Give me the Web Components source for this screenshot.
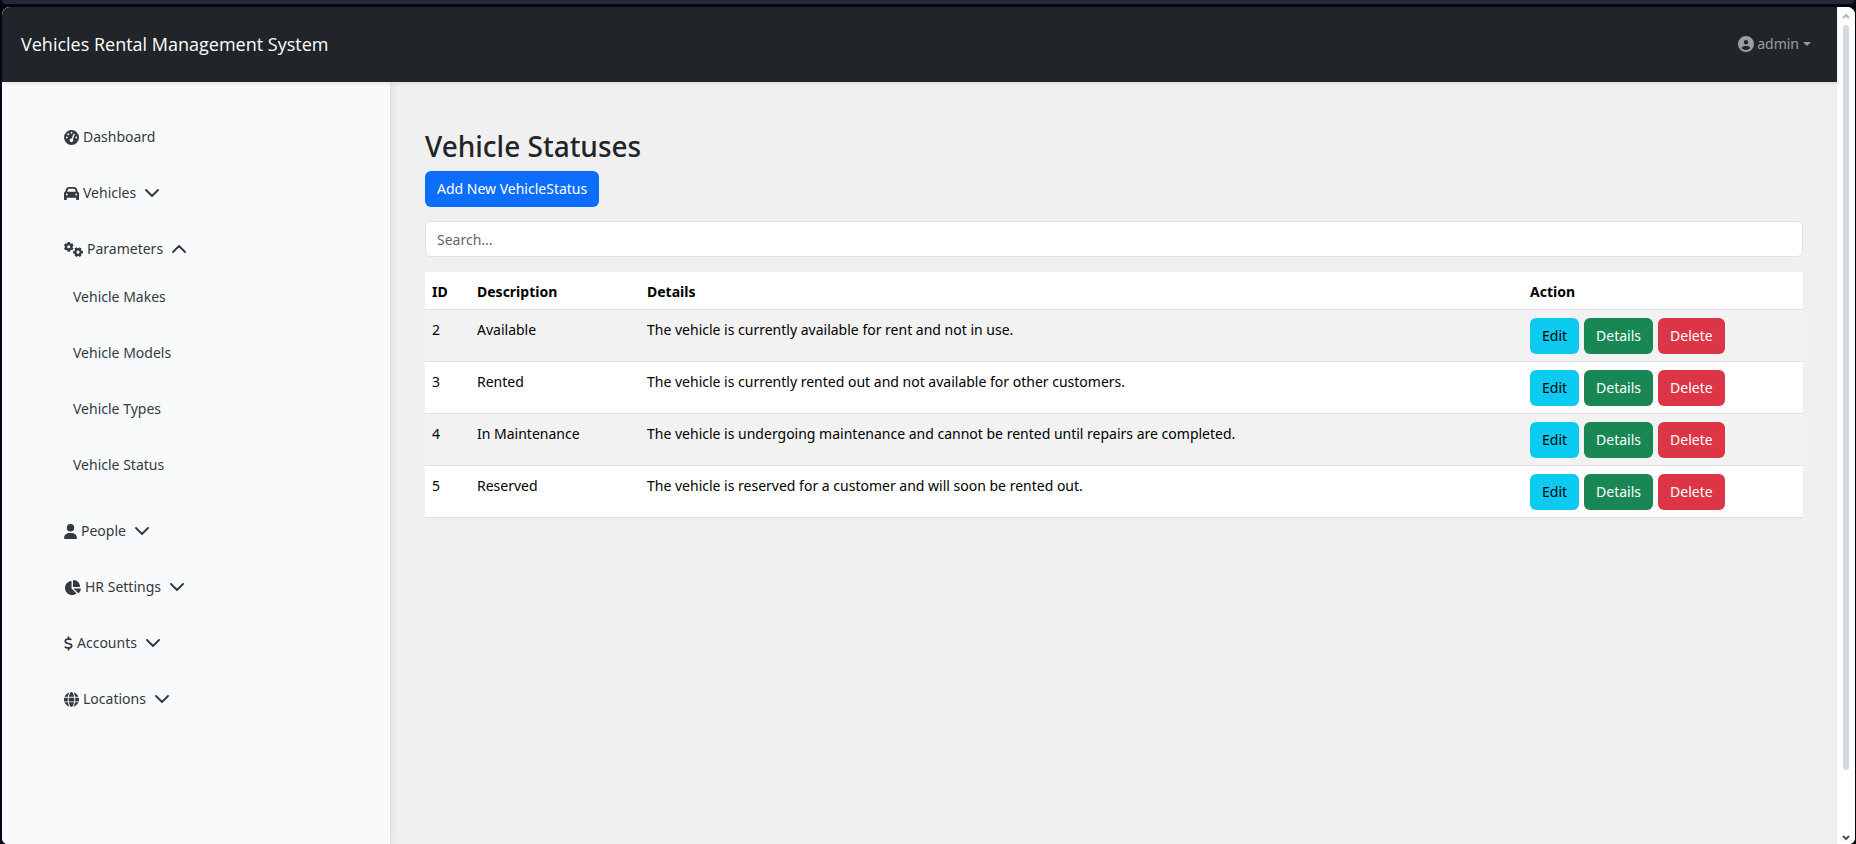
<!DOCTYPE html>
<html lang="en">
<head>
<meta charset="utf-8">
<title>Vehicle Statuses - Vehicles Rental Management System</title>
<style>
  html, body { margin: 0; background: #030616; }
  body { font: 14px/24px "Noto Sans", "Open Sans", sans-serif; color: #212529; }
</style>
</head>
<body>
<app-window>
  <app-header slot="header" brand="Vehicles Rental Management System" user="admin"></app-header>
  <side-nav slot="nav">
    <nav-item icon="gauge">Dashboard</nav-item>
    <nav-item icon="car" menu="closed">Vehicles</nav-item>
    <nav-item icon="gears" menu="open">Parameters
      <nav-sub slot="sub">Vehicle Makes</nav-sub>
      <nav-sub slot="sub">Vehicle Models</nav-sub>
      <nav-sub slot="sub">Vehicle Types</nav-sub>
      <nav-sub slot="sub">Vehicle Status</nav-sub>
    </nav-item>
    <nav-item icon="user" menu="closed">People</nav-item>
    <nav-item icon="pie" menu="closed">HR Settings</nav-item>
    <nav-item icon="dollar" menu="closed">Accounts</nav-item>
    <nav-item icon="globe" menu="closed">Locations</nav-item>
  </side-nav>
  <status-page></status-page>
</app-window>

<script>
const ICONS = {
  gauge: [512, 'M0 256a256 256 0 1 1 512 0A256 256 0 1 1 0 256zM288 96a32 32 0 1 0 -64 0 32 32 0 1 0 64 0zM256 416c35.300 0 64-28.700 64-64c0-17.400-6.900-33.100-18.100-44.600L366 161.700c5.300-12.100-.2-26.300-12.300-31.600s-26.300 .2-31.600 12.300L257.900 288c-.6 0-1.300 0-1.900 0c-35.300 0-64 28.700-64 64s28.700 64 64 64zM176 144a32 32 0 1 0 -64 0 32 32 0 1 0 64 0zM96 288a32 32 0 1 0 0-64 32 32 0 1 0 0 64zm352-32a32 32 0 1 0 -64 0 32 32 0 1 0 64 0z'],
  car: [512, 'M135.2 117.4L109.1 192H402.9l-26.1-74.6C372.3 104.6 360.2 96 346.6 96H165.4c-13.6 0-25.7 8.6-30.2 21.4zM39.6 196.8L74.8 96.3C88.3 57.8 124.6 32 165.4 32H346.6c40.8 0 77.1 25.8 90.6 64.3l35.2 100.5c23.2 9.6 39.6 32.5 39.6 59.2V400v48c0 17.7-14.3 32-32 32H448c-17.7 0-32-14.3-32-32V400H96v48c0 17.7-14.3 32-32 32H32c-17.7 0-32-14.3-32-32V400 256c0-26.7 16.4-49.6 39.6-59.2zM128 288a32 32 0 1 0 -64 0 32 32 0 1 0 64 0zm288 32a32 32 0 1 0 0-64 32 32 0 1 0 0 64z'],
  user: [448, 'M224 256A128 128 0 1 0 224 0a128 128 0 1 0 0 256zm-45.7 48C79.8 304 0 383.8 0 482.3C0 498.7 13.3 512 29.7 512H418.3c16.4 0 29.7-13.3 29.7-29.7C448 383.8 368.2 304 269.7 304H178.3z'],
  pie: [576, 'M304 240V16.6c0-9 7-16.6 16-16.6C443.7 0 544 100.3 544 224c0 9-7.6 16-16.6 16H304zM32 272C32 150.7 122.1 50.3 239 34.3c9.2-1.3 17 6.1 17 15.4V288L412.5 444.5c6.7 6.7 6.2 17.7-1.5 23.1C371.8 495.6 323.8 512 272 512C139.5 512 32 404.6 32 272zm526.4 16c9.3 0 16.6 7.8 15.4 17c-7.7 55.9-34.6 105.6-73.9 142.3c-6 5.6-15.4 5.2-21.2-.7L320 288H558.4z'],
  dollar: [320, 'M160 0c17.7 0 32 14.3 32 32V67.7c1.6 .2 3.1 .4 4.7 .7c.4 .1 .7 .1 1.1 .2l48 8.8c17.4 3.2 28.9 19.9 25.7 37.2s-19.9 28.9-37.2 25.7l-47.5-8.7c-31.3-4.6-58.9-1.5-78.3 6.2s-27.2 18.3-29 28.1c-2 10.7-.5 16.7 1.2 20.4c1.8 3.9 5.5 8.3 12.8 13.2c16.3 10.7 41.3 17.7 73.7 26.3l2.9 .8c28.6 7.6 63.6 16.8 89.6 33.8c14.2 9.3 27.6 21.9 35.9 39.5c8.5 17.9 10.3 37.9 6.4 59.2c-6.9 38-33.1 63.4-65.6 76.7c-13.7 5.6-28.6 9.2-44.4 11V480c0 17.7-14.3 32-32 32s-32-14.3-32-32V445.1c-.4-.1-.9-.1-1.3-.2l-.2 0 0 0c-24.4-3.8-64.5-14.3-91.5-26.3c-16.1-7.2-23.4-26.1-16.2-42.2s26.1-23.4 42.2-16.2c20.9 9.3 55.3 18.5 75.2 21.6c31.9 4.7 58.2 2 76-5.3c16.9-6.9 24.6-16.9 26.8-28.9c1.900-10.6 .4-16.7-1.300-20.4c-1.900-4-5.600-8.400-13-13.300c-16.400-10.700-41.500-17.700-74-26.300l-2.800-.7 0 0C119.400 279.300 84.400 270 58.400 253c-14.200-9.300-27.500-22-35.800-39.600c-8.400-17.900-10.100-37.900-6.100-59.200C23.700 116 52.300 91.200 84.800 78.300c13.300-5.300 27.900-8.900 43.200-11V32c0-17.700 14.300-32 32-32z'],
  globe: [512, 'M352 256c0 22.2-1.2 43.6-3.3 64H163.3c-2.2-20.4-3.3-41.8-3.3-64s1.2-43.6 3.3-64H348.7c2.2 20.4 3.3 41.8 3.3 64zm28.8-64H503.9c5.3 20.5 8.1 41.9 8.1 64s-2.8 43.5-8.1 64H380.8c2.1-20.6 3.2-42 3.2-64s-1.1-43.4-3.2-64zm112.6-32H376.7c-10-63.9-29.8-117.4-55.3-151.6c78.3 20.7 142 77.5 171.9 151.6zm-149.1 0H167.7c6.1-36.4 15.5-68.6 27-94.7c10.5-23.6 22.2-40.7 33.5-51.5C239.4 3.2 248.7 0 256 0s16.6 3.2 27.8 13.8c11.3 10.8 23 27.9 33.5 51.5c11.6 26 20.9 58.2 27 94.7zm-209 0H18.6C48.6 85.9 112.2 29.1 190.6 8.4C165.1 42.6 145.3 96.1 135.3 160zM8.1 192H131.2c-2.1 20.6-3.2 42-3.2 64s1.1 43.4 3.2 64H8.1C2.8 299.5 0 278.1 0 256s2.8-43.5 8.1-64zM194.7 446.6c-11.6-26-20.9-58.2-27-94.6H344.3c-6.1 36.4-15.5 68.6-27 94.6c-10.5 23.6-22.2 40.7-33.5 51.5C272.6 508.8 263.3 512 256 512s-16.6-3.2-27.8-13.8c-11.3-10.8-23-27.9-33.5-51.5zM135.3 352c10 63.9 29.8 117.4 55.3 151.6C112.2 482.9 48.6 426.1 18.6 352H135.3zm358.1 0c-30 74.1-93.6 130.9-171.9 151.6c25.5-34.2 45.2-87.7 55.3-151.6H493.4z'],
  account: [512, 'M399 384.2C376.9 345.8 335.4 320 288 320H224c-47.4 0-88.9 25.8-111 64.2c35.2 39.2 86.2 63.8 143 63.8s107.8-24.7 143-63.8zM0 256a256 256 0 1 1 512 0A256 256 0 1 1 0 256zm256 16a72 72 0 1 0 0-144 72 72 0 1 0 0 144z']
};

/* One cog: a ring with six teeth, optionally turned. */
const cog = (cx, cy, turn) => `<g transform="translate(${cx} ${cy}) rotate(${turn})" stroke="currentColor" fill="none">
  <circle r="92" stroke-width="80"/>
  ${[0, 60, 120].map(a => `<path transform="rotate(${a})" d="M0 -166V-110M0 110V166" stroke-width="86"/>`).join('')}</g>`;

const svgIcon = (name, h = 15) => {
  if (name === 'gears') {
    return `<svg width="19" height="${h}" viewBox="0 0 640 512" aria-hidden="true">${cog(158, 164, 0)}${cog(474, 346, 30)}</svg>`;
  }
  const [w, d] = ICONS[name];
  return `<svg width="${Math.round(w / 512 * h)}" height="${h}" viewBox="0 0 ${w} 512" aria-hidden="true"><path fill="currentColor" fill-rule="${name === 'car' || name === 'gauge' || name === 'account' ? 'evenodd' : 'nonzero'}" d="${d}"/></svg>`;
};

function define(name, render) {
  customElements.define(name, class extends HTMLElement {
    connectedCallback() {
      if (this.shadowRoot) return;
      this.attachShadow({ mode: 'open' }).innerHTML = render(this);
    }
  });
}

define('app-window', () => `
  <style>
    :host { display: flex; flex-direction: column; min-height: 100vh; }
    .strip { height: 4px; margin: 0 2px 3px; background: #252933; border-radius: 0 0 8px 8px; }
    .frame { flex: 1; display: flex; margin: 0 1px 0 2px; border-radius: 8px 8px 6px 6px; overflow: hidden; background: #fff; }
    .page { flex: 1; min-width: 0; display: flex; flex-direction: column; background: #f0f0f0; }
    .body { flex: 1; display: flex; }
    ::slotted(side-nav) { flex: none; }
    ::slotted(status-page) { flex: 1; min-width: 0; }
  </style>
  <div class="strip"></div>
  <div class="frame">
    <div class="page">
      <slot name="header"></slot>
      <div class="body"><slot name="nav"></slot><slot></slot></div>
    </div>
    <scroll-rail></scroll-rail>
  </div>`);

define('scroll-rail', () => `
  <style>
    :host { display: flex; flex-direction: column; align-items: center; width: 18px; padding: 6px 0 3px; box-sizing: border-box; background: #fff; }
    svg { display: block; }
    .track { flex: 1; margin: 6px 0 0; }
    .thumb { width: 6px; height: 92%; border-radius: 3px; background: #cfdae3; }
  </style>
  <svg width="8" height="6" viewBox="0 0 8 6"><path d="M1 5l3-3 3 3" fill="none" stroke="#b4b4b4" stroke-width="2"/></svg>
  <div class="track"><div class="thumb"></div></div>
  <svg width="8" height="6" viewBox="0 0 8 6"><path d="M1 1l3 3 3-3" fill="none" stroke="#505050" stroke-width="2"/></svg>`);

define('app-header', el => `
  <style>
    :host { display: flex; align-items: center; justify-content: space-between; box-sizing: border-box; height: 75px; padding: 0 26px 2px 19px; background: #212529; position: relative; z-index: 1; box-shadow: 0 2px 4px rgba(0,0,0,.08); }
    a { color: #fff; font: 18px/28px "Open Sans", sans-serif; text-decoration: none; }
    button { display: flex; align-items: center; gap: 3px; padding: 0; border: 0; background: none; color: #9b9d9f; font: inherit; line-height: 24px; }
    .caret { margin-left: 1px; border: 4px solid transparent; border-top-color: currentColor; border-bottom: 0; }
  </style>
  <a href="#">${el.getAttribute('brand')}</a>
  <button type="button" aria-haspopup="true">${svgIcon('account', 16)}<span>${el.getAttribute('user')}</span><span class="caret"></span></button>`);

define('side-nav', () => `
  <style>
    :host { display: block; width: 389px; box-sizing: border-box; padding: 35px 62px; background: #f8fafc; border-right: 1px solid #dee2e6; box-shadow: 2px 0 8px rgba(0,0,0,.06); color: #343a40; }
    nav { display: flex; flex-direction: column; gap: 16px; }
  </style>
  <nav><slot></slot></nav>`);

define('nav-item', el => {
  const menu = el.getAttribute('menu');
  const chevron = menu ? `<svg class="chev" width="14" height="8" viewBox="0 0 14 8" aria-hidden="true"><path d="${menu === 'open' ? 'M1 7l6-6 6 6' : 'M1 1l6 6 6-6'}" fill="none" stroke="currentColor" stroke-width="1.9" stroke-linecap="round" stroke-linejoin="round"/></svg>` : '';
  return `
  <style>
    :host { display: block; }
    a { display: flex; align-items: center; gap: 4px; height: 40px; color: inherit; text-decoration: none; }
    svg { flex: none; }
    .chev { margin-left: 5px; }
    .sub { display: flex; flex-direction: column; gap: 16px; padding: 8px 0 10px 9px; }
  </style>
  <a href="#">${svgIcon(el.getAttribute('icon'))}<span><slot></slot></span>${chevron}</a>
  ${menu === 'open' ? '<div class="sub"><slot name="sub"></slot></div>' : ''}`;
});

define('nav-sub', () => `
  <style>
    :host { display: block; }
    a { display: flex; align-items: center; height: 40px; color: inherit; text-decoration: none; }
  </style>
  <a href="#"><slot></slot></a>`);

const VARIANTS = { primary: ['#0d6efd', '#fff'], info: ['#0dcaf0', '#000'], success: ['#198754', '#fff'], danger: ['#dc3545', '#fff'] };
define('app-button', el => {
  const [bg, fg] = VARIANTS[el.getAttribute('variant')];
  return `
  <style>
    :host { display: block; }
    button { display: block; box-sizing: border-box; height: 36px; padding: 0 12px; border: 0; border-radius: 6px; background: ${bg}; color: ${fg}; font: inherit; line-height: 24px; white-space: nowrap; }
  </style>
  <button type="button"><slot></slot></button>`;
});

define('status-page', () => `
  <style>
    :host { display: block; padding: 46px 34px 35px; }
    h1 { margin: 0 0 7px; font-size: 28px; font-weight: 500; line-height: 36px; }
    input { display: block; width: 100%; box-sizing: border-box; height: 36px; margin: 14px 0 15px; padding: 0 11px; border: 1px solid #dee2e6; border-radius: 6px; background: #fff; color: inherit; font: inherit; }
    input::placeholder { color: #60666c; opacity: 1; }
  </style>
  <h1>Vehicle Statuses</h1>
  <app-button variant="primary">Add New VehicleStatus</app-button>
  <input type="search" placeholder="Search..." aria-label="Search">
  <status-table></status-table>`);

const STATUSES = [
  [2, 'Available', 'The vehicle is currently available for rent and not in use.'],
  [3, 'Rented', 'The vehicle is currently rented out and not available for other customers.'],
  [4, 'In Maintenance', 'The vehicle is undergoing maintenance and cannot be rented until repairs are completed.'],
  [5, 'Reserved', 'The vehicle is reserved for a customer and will soon be rented out.']
];
define('status-table', () => `
  <style>
    :host { display: block; }
    table { width: 100%; table-layout: fixed; border-collapse: separate; border-spacing: 0; color: #000; background: #fff; }
    .id { width: 45px; } .desc { width: 170px; } .act { width: 280px; }
    th, td { text-align: left; vertical-align: top; border-bottom: 1px solid #dee2e6; }
    th { padding: 8px 7px 5px; }
    td { padding: 8px 7px 7px; }
    tbody tr:nth-child(odd) { background: #f2f2f2; }
    .buttons { display: flex; gap: 5px; }
  </style>
  <table>
    <colgroup><col class="id"><col class="desc"><col><col class="act"></colgroup>
    <thead><tr><th>ID</th><th>Description</th><th>Details</th><th>Action</th></tr></thead>
    <tbody>${STATUSES.map(([id, name, text]) => `<tr><td>${id}</td><td>${name}</td><td>${text}</td><td><div class="buttons">
      <app-button variant="info">Edit</app-button><app-button variant="success">Details</app-button><app-button variant="danger">Delete</app-button></div></td></tr>`).join('')}</tbody>
  </table>`);
</script>
</body>
</html>
